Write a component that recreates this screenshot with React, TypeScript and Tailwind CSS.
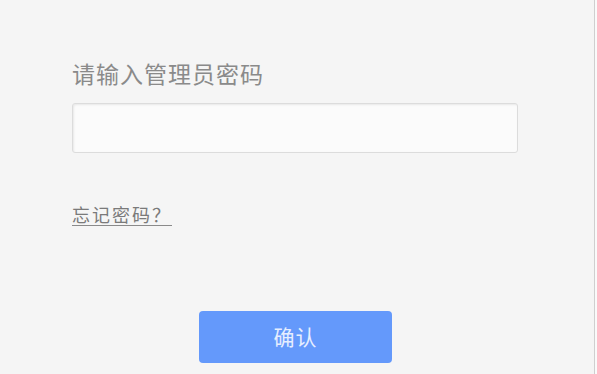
import React from 'react';

const App: React.FC = () => {
  return (
    <div className="flex h-[374px] w-[597px] bg-[#fafafa]" style={{ fontFamily: '"Noto Sans CJK SC", "Noto Sans", sans-serif' }}>
      <div className="h-full w-[595px] border-r border-[#cfcfcf] bg-[#f5f5f5] pl-[72px] pt-[60px]">
        <div className="text-[23px] leading-[26px] tracking-[1px] text-[#8a8a8a]">请输入管理员密码</div>
        <input
          type="password"
          className="mt-[17px] block h-[50px] w-[446px] rounded-[3px] border border-[#dcdcdc] bg-[#fbfbfb] shadow-[inset_1px_1px_2px_rgba(0,0,0,0.08)] outline-none"
        />
        <a href="#" className="mt-[50px] inline-block pr-[10px] text-[18px] leading-[22px] tracking-[2px] text-[#7a7a7a] underline decoration-[#8a8a8a] underline-offset-[3px]">
          忘记密码？
        </a>
        <div className="mt-[84px] flex pl-[127px]">
          <button className="h-[52px] w-[193px] rounded-[4px] bg-[#6499fb] text-[21px] tracking-[1px] text-[#e6eeff]">
            确认
          </button>
        </div>
      </div>
    </div>
  );
};

export default App;
